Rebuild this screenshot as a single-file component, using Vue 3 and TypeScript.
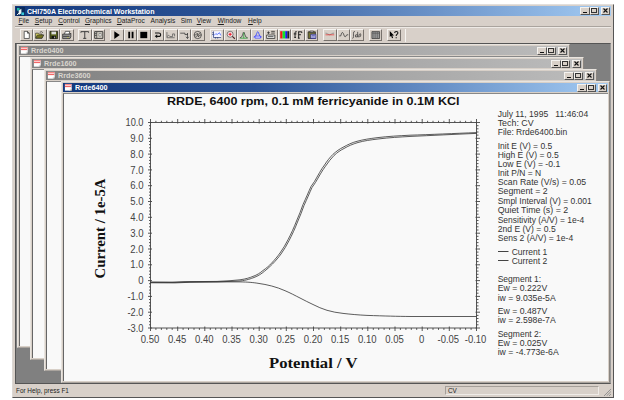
<script setup lang="ts">
interface Child { title: string; x: number; y: number; w: number; h: number; active: boolean }
interface Label { t: string; y: number; w: number }

const menus = [
  { t: 'File', w: 16.2 }, { t: 'Setup', w: 23.6 }, { t: 'Control', w: 26.6 }, { t: 'Graphics', w: 32 },
  { t: 'DataProc', w: 33.6 }, { t: 'Analysis', w: 30.2, plain: true }, { t: 'Sim', w: 16, plain: true },
  { t: 'View', w: 21 }, { t: 'Window', w: 30.4 }, { t: 'Help', w: 20 },
]

const toolbar: { pad: number; items: string[] }[] = [
  { pad: 0, items: ['new', 'open', 'save', 'print'] },
  { pad: 4.5, items: ['tech', 'param'] },
  { pad: 5, items: ['play', 'pause', 'stop', 'reverse', 'zero', 'ir', 'cell'] },
  { pad: 5.5, items: ['plot', 'zoom', 'peak', 'peak2', 'info', 'color', 'font', 'paste'] },
  { pad: 5.3, items: ['base', 'smooth', 'integral'] },
  { pad: 5.2, items: ['list'] },
  { pad: 5, items: ['help'] },
]

const windows: Child[] = [
  { title: 'Rrde0400', x: 1, y: 0, w: 553, h: 304, active: false },
  { title: 'Rrde1600', x: 14, y: 13, w: 554, h: 303, active: false },
  { title: 'Rrde3600', x: 28, y: 25, w: 553, h: 302, active: false },
  { title: 'Rrde6400', x: 45, y: 37, w: 549, h: 302, active: true },
]

const X0 = 150.5, X1 = 476.5, Y0 = 122.5, Y1 = 328
const dx = (X1 - X0) / 60
const dy = (Y1 - Y0) / 65
let bottomTicks = '', topTicks = '', leftTicks = '', rightTicks = ''
for (let i = 0; i <= 60; i++) {
  const x = (X0 + i * dx).toFixed(1)
  if (i % 5 === 0) {
    bottomTicks += `M${x} 326.5v4.5`
    topTicks += `M${x} 119v4.5`
  } else {
    bottomTicks += `M${x} 328v1.9`
    topTicks += `M${x} 120.8v1.7`
  }
}
for (let j = 0; j <= 65; j++) {
  const y = (Y0 + j * dy).toFixed(1)
  const major = j % 5 === 0
  leftTicks += major ? `M148 ${y}h4` : `M149 ${y}h1.5`
  rightTicks += major ? `M475.5 ${y}h4.5` : `M476.5 ${y}h2`
}
const xLabels = ['0.50', '0.45', '0.40', '0.35', '0.30', '0.25', '0.20', '0.15', '0.10', '0.05', '0', '-0.05', '-0.10']
const yLabels = ['10.0', '9.0', '8.0', '7.0', '6.0', '5.0', '4.0', '3.0', '2.0', '1.0', '0', '-1.0', '-2.0', '-3.0']
const xw = (s: string) => (s.length === 1 ? 5.3 : s.length === 4 ? 18.5 : 21.5)
const yw = (s: string) => [0, 5.3, 0, 13.3, s[0] === '-' ? 16 : 18][s.length]

const info: Label[] = [
  { t: 'July 11, 1995\u00a0\u00a0 11:46:04', y: 116.8, w: 90.5 },
  { t: 'Tech: CV', y: 126, w: 36 },
  { t: 'File: Rrde6400.bin', y: 135.2, w: 69.5 },
  { t: 'Init E (V) = 0.5', y: 148.6, w: 54.5 },
  { t: 'High E (V) = 0.5', y: 157.8, w: 61 },
  { t: 'Low E (V) = -0.1', y: 166.9, w: 62.5 },
  { t: 'Init P/N = N', y: 176, w: 43.5 },
  { t: 'Scan Rate (V/s) = 0.05', y: 185.1, w: 88.5 },
  { t: 'Segment = 2', y: 194.3, w: 50 },
  { t: 'Smpl Interval (V) = 0.001', y: 203.8, w: 94 },
  { t: 'Quiet Time (s) = 2', y: 213.3, w: 70.5 },
  { t: 'Sensitivity (A/V) = 1e-4', y: 222.6, w: 86.5 },
  { t: '2nd E (V) = 0.5', y: 231.9, w: 58 },
  { t: 'Sens 2 (A/V) = 1e-4', y: 241, w: 75.5 },
  { t: 'Segment 1:', y: 282.2, w: 43.5 },
  { t: 'Ew = 0.222V', y: 291.4, w: 49.5 },
  { t: 'iw = 9.035e-5A', y: 300.5, w: 58 },
  { t: 'Ew = 0.487V', y: 313.7, w: 49.5 },
  { t: 'iw = 2.598e-7A', y: 323, w: 58 },
  { t: 'Segment 2:', y: 337, w: 43.5 },
  { t: 'Ew = 0.025V', y: 346.2, w: 49.5 },
  { t: 'iw = -4.773e-6A', y: 355.4, w: 61 },
]

const forward = 'M150.5 282L172 282.2L184 281.7L217 281.4L230 280.7L240 279.8C246 279 250 277.6 253 276.4C257 275 260 273 263 270.5C267 267.6 269 266 271.5 263.2C275 259.5 277.5 256.5 280 253C283 249 285.5 244.5 288 239.7C291 234 294 227.5 296.5 221C299 215.5 301 210 303 204.5C306 198 308.5 192 311 186.5L314.4 181.6C318 175.5 321 169.5 324.5 165C327 161 330 157.3 333 154.3C336.5 151.2 339.5 149 343 147.3C347.5 144.8 352 142.6 357 141.3C363 139.6 370 138.6 377 137.7C388 136.3 399 135.8 410 135.2C430 134.6 455 133.4 476.5 132.6'
const reverse = 'M150.5 282.8L175 282.9L190 282.3L217 281.9L240 281C247 280.2 251 278.6 254 277.5C258 276 261.5 273.8 264.5 271.2C268 268.4 270 266.5 272.5 264C276 260.4 278.5 257.4 281 254C284 250 286.5 245.4 289 240.7C292 235 295 228.5 297.5 222C300 216.5 302 211 304 205.5C307 199 309.5 193 312 187.5L315.4 182.6C319 176.5 322 170.8 325.5 166.2C328 162.4 331 158.6 334 155.5C337.5 152.3 340.5 150.2 344 148.5C348 146 353 144 358 142.5C364 140.8 371 139.8 378 139C389 137.6 400 137 411 136.4C431 135.5 455 134.3 476.5 133.4'
const ring = 'M150.5 282.4H175L190 281.9H240C248 282 253 282.5 258 283.3C263 284 267 284.8 271.7 286C276.5 287.2 280.5 288.8 285 290.7C290.5 293 295 295.5 300 298C304.5 300.4 309 302.6 313 304.5C317.5 306.8 322 308.8 327 310.3C332 311.8 337.5 312.8 343 313.4C351 314.3 358.5 315 367 315.4C385 316 397 316.4 411 316.5H476.5'
</script>

<template>
  <div class="app">
    <header class="title main">
      <svg class="logo" viewBox="0 0 10 10"><rect width="10" height="10" fill="#0a2a5c" /><path d="M1 1h3v3H1z" fill="#20b8a8" /><path d="M3 4l3-2v5l-3 2z" fill="#e8f4f4" /><path d="M6 6h3v3H6z" fill="#38c8d8" /><path d="M1 9l3-3" stroke="#fff" /></svg>
      <svg class="caption" width="136" height="10"><text x="0" y="7.5" textLength="127.5" lengthAdjust="spacingAndGlyphs">CHI750A Electrochemical Workstation</text></svg>
      <span class="controls"><i class="min" /><i class="max" /><i class="close">
        <svg viewBox="0 0 9 7"><path d="M2.5 1.5l4 4m0-4l-4 4" /></svg></i></span>
    </header>

    <nav class="menu">
      <span v-for="m in menus" :key="m.t" :style="{ width: m.w + 'px' }"><template v-if="m.plain">{{ m.t }}</template><template v-else><u>{{ m.t[0] }}</u>{{ m.t.slice(1) }}</template></span>
    </nav>

    <div class="toolbar">
      <div v-for="(g, gi) in toolbar" :key="gi" class="group" :style="{ marginLeft: g.pad + 'px' }">
        <button v-for="k in g.items" :key="k" class="tool">
          <svg viewBox="0 0 12 11" fill="none" stroke="#333" stroke-width=".8">
            <path v-if="k === 'new'" d="M3.2 1.5h3.6l2 2v5.8H3.2zM6.8 1.5v2h2" fill="#fff" />
            <template v-else-if="k === 'open'"><path d="M1.5 9V3.5h3l1 1h3V9z" fill="#e8e060" /><path d="M1.5 9l2-3.6h7L8.5 9z" fill="#77751c" /><path d="M6 2.5q2-1.6 3.5.5" /></template>
            <template v-else-if="k === 'save'"><path d="M1.8 1.5h8.4v8H1.8z" fill="#56601c" stroke="#111" /><path d="M3.5 1.8h5v3h-5z" fill="#ddd" stroke="none" /><path d="M3.6 6.5h4.8v3H3.6z" fill="#111" stroke="none" /><path d="M7 7.3v1.8" stroke="#fff" /></template>
            <template v-else-if="k === 'print'"><path d="M3.5 4.5l1-3h5l-1 3" fill="#fff" /><path d="M1.5 4.5h8l1-1v4l-1 2h-8z" fill="#999" stroke="#222" /><path d="M2 7h7" stroke="#222" /><path d="M6.5 8.2H8" stroke="#cc3" /></template>
            <path v-else-if="k === 'tech'" d="M1.8 3V1.8h8.4V3M6 1.8v7.4M4.3 9.2h3.4" stroke="#333" stroke-width="1" />
            <template v-else-if="k === 'param'"><path d="M1.5 1.8h9v7.4h-9z" fill="#d8d4c8" stroke-width="1" /><path d="M3.8 2v7M1.7 4h2M1.7 6h2" /><path d="M6.2 3.8h2.5v3H6.2z" fill="#f4f4ee" stroke="#777" /></template>
            <path v-else-if="k === 'play'" d="M3.3 1.4l6 4.2-6 4.2z" fill="#000" stroke="none" />
            <path v-else-if="k === 'pause'" d="M3.3 2h2v7h-2zM7 2h2v7H7z" fill="#000" stroke="none" />
            <path v-else-if="k === 'stop'" d="M2.2 2h7.6v7H2.2z" fill="#000" stroke="none" />
            <template v-else-if="k === 'reverse'"><path d="M3 3.3h4.2q2 0 2 1.9T7.2 7H4.5" stroke="#111" stroke-width="1.2" /><path d="M5.4 4.8v4.4L2.7 7z" fill="#111" stroke="none" /></template>
            <path v-else-if="k === 'zero'" d="M1.8 2.3v6.2h8.5M2 7.2q2-3 3 0h3V4.3h2.2V7" stroke="#555" />
            <path v-else-if="k === 'ir'" d="M1 3.5h5.2V5H9V3.5M9 3.5v5.8M7.3 7.5L9 9.3l1.3-1.8" stroke="#333" />
            <template v-else-if="k === 'cell'"><circle cx="6" cy="5.5" r="4" /><path d="M2 5.5h1.7l1.8-2 1.2 4.2 1.2-2.2H10M3.5 8l5-5" /></template>
            <template v-else-if="k === 'plot'"><path d="M1 1.3h10v8H1z" fill="#f4f4ff" stroke="none" /><path d="M2.4 1.5v6.8h8.4M1 3h1.4M1 5h1.4M4.6 8v1.4M7 8v1.4" stroke="#24346c" /><path d="M3 6l2-2 1.5 1L9 3l1.5 3" stroke="#35f" /></template>
            <template v-else-if="k === 'zoom'"><circle cx="5.3" cy="4.7" r="3.3" fill="#f9e6e6" stroke="#555" /><path d="M3.6 4.7H7M5.3 3v3.4" stroke="#e12" stroke-width="1.1" /><path d="M7.7 7l2.8 2.6" stroke="#422" stroke-width="1.2" /></template>
            <template v-else-if="k === 'peak'"><path d="M1.5 8.8Q4.3 8.5 5 4.5q1-4.5 2 0 .7 4 3.5 4.3" stroke="#333" /><path d="M2 9h8M6 3v6" stroke="#179a25" /></template>
            <template v-else-if="k === 'peak2'"><path d="M1.5 7.8q2.5 0 3.2-3.5 1.3-5 2.6 0Q8 7.8 10.5 7.8" stroke="#45f" stroke-width="1" /><path d="M3 6.7h6v2.2H3z" fill="#e8edff" stroke="#33f" /></template>
            <template v-else-if="k === 'info'"><path d="M1.5 5.5h9v3.8h-9z" fill="#eee" stroke="#222" /><path d="M2 3h3M3.5 1.5v3M6.5 1.5h4M6.5 3.4h4M3 7.3h6" stroke="#222" /></template>
            <template v-else-if="k === 'color'"><path d="M1 1.3h2.6v8H1z" fill="#f01818" stroke="none" /><path d="M3.6 1.3h3v8h-3z" fill="#13e428" stroke="none" /><path d="M6.6 1.3h2.3v8H6.6z" fill="#1818f0" stroke="none" /><path d="M8.9 1.3H11v8H8.9z" fill="#222" stroke="none" /></template>
            <path v-else-if="k === 'font'" d="M5 2q-2-.8-2 1.2v5M1.6 4.3h3M2.2 8.2h1.9M6.4 2h4v1.3M7 2v7M6.2 9h2M7 5.2h2.5" stroke="#111" stroke-width="1" />
            <template v-else-if="k === 'paste'"><path d="M2 2h8v7.3H2z" fill="#747230" stroke="#222" /><path d="M4 1.2h4v1.6H4z" fill="#ddd" /><path d="M5 4.7h5.5v4.6H5z" fill="#dfe3ff" stroke="#228" /><path d="M6 6.2h3.5M6 7.7h3.5" stroke="#339" /></template>
            <template v-else-if="k === 'base'"><path d="M1.3 3.5q1.5 0 2.5 1 2 1.5 4 0 1.2-1.2 3-1" stroke="#777" /><path d="M1.3 5.3h9.6" stroke="#e33" /></template>
            <path v-else-if="k === 'smooth'" d="M1 6.5h1.7Q4 1 5.4 3.5L6.8 7Q8 8.5 9.3 5.3H11" stroke="#333" />
            <path v-else-if="k === 'integral'" d="M1.2 9.2q1.2 0 1.2-2V3.5q0-2 1.5-2M7 2v6M7 5.5Q4.3 4.4 4.3 6.6T7 7M8 8l.8-3.2q1.7-1.7 1.7.6T8.8 7.5" stroke="#333" />
            <template v-else-if="k === 'list'"><path d="M1.8 1.8h8.4v7.6H1.8z" fill="#999" stroke="#333" /><path d="M4 2v7M6 2v7M8 2v7M2 3.7h8" stroke="#555" stroke-width=".6" /></template>
            <template v-else><path d="M1.6 1.2v6.5l1.5-1.3 1 2.6 1.2-.5-1-2.4h2z" fill="#000" stroke="none" /><path d="M7 3.3q0-1.6 1.8-1.6t1.7 1.5q0 1-1 1.6-.8.5-.8 1.7M8.7 8v1.2" stroke="#111" stroke-width="1.2" /></template>
          </svg>
        </button>
      </div>
      <span class="groove" />
    </div>

    <main class="mdi">
      <section
        v-for="w in windows" :key="w.title" class="child"
        :style="{ left: w.x + 'px', top: w.y + 'px', width: w.w + 'px', height: w.h + 'px' }"
      >
        <div class="title" :class="{ inactive: !w.active }">
          <svg class="logo" viewBox="0 0 10 10"><path d="M1 1h7.5v7.5H1z" fill="#fff" /><path d="M1 2h7.5M1 4h7" stroke="#e44" /><path d="M1 8.8h5L9 6v3z" fill="#333" /><path d="M5 8.5L8.6 5v3.5z" fill="#ddd" /></svg>
          <svg class="caption" width="40" height="9"><text x="0" y="6.8" textLength="32.5" lengthAdjust="spacingAndGlyphs">{{ w.title }}</text></svg>
          <span class="controls"><i class="min" /><i class="max" /><i class="close">
            <svg viewBox="0 0 9 7"><path d="M2.5 1.5l4 4m0-4l-4 4" /></svg></i></span>
        </div>
        <div class="body">
          <svg v-if="w.active" class="chart" width="544" height="288" viewBox="64 94 544 288">
            <text class="head" x="167" y="104.7" textLength="292.5" lengthAdjust="spacingAndGlyphs">RRDE, 6400 rpm, 0.1 mM ferricyanide in 0.1M KCl</text>
            <text class="axis" x="269" y="367.7" textLength="88.5" lengthAdjust="spacingAndGlyphs">Potential / V</text>
            <text class="axis" transform="translate(105 278.5) rotate(-90)" textLength="100" lengthAdjust="spacingAndGlyphs">Current / 1e-5A</text>
            <rect class="frame" :x="X0" :y="Y0" :width="X1 - X0" :height="Y1 - Y0" />
            <path class="ticks" :d="bottomTicks + topTicks + leftTicks + rightTicks" />
            <text
              v-for="(l, i) in xLabels" :key="'x' + l" class="num" text-anchor="middle"
              :x="X0 + i * 5 * dx - (l[0] === '-' ? 1 : 0.5)" y="343.3" :textLength="xw(l)" lengthAdjust="spacingAndGlyphs"
            >{{ l }}</text>
            <text
              v-for="(l, i) in yLabels" :key="'y' + l" class="num" text-anchor="end"
              x="143.5" :y="Y0 + i * 5 * dy + 3.7" :textLength="yw(l)" lengthAdjust="spacingAndGlyphs"
            >{{ l }}</text>
            <path class="curve" :d="forward" />
            <path class="curve" :d="reverse" />
            <path class="curve" :d="ring" />
            <text v-for="l in info" :key="l.y" class="info" x="497.7" :y="l.y" :textLength="l.w" lengthAdjust="spacingAndGlyphs">{{ l.t }}</text>
            <path class="key" d="M498 251.5h10.5M498 260.5h10.5" />
            <text class="info" x="511.7" y="254.8" textLength="35.5" lengthAdjust="spacingAndGlyphs">Current 1</text>
            <text class="info" x="511.7" y="264" textLength="35.5" lengthAdjust="spacingAndGlyphs">Current 2</text>
          </svg>
        </div>
      </section>
    </main>

    <footer class="status">
      <span class="hint">For Help, press F1</span>
      <span class="mode">CV</span>
      <svg class="grip" viewBox="0 0 8 8"><path d="M1 8l7-7M3.5 8L8 3.5M6 8l2-2" stroke="#888" stroke-width=".9" /></svg>
    </footer>
  </div>
</template>

<style>
body { background: #fff; overflow: hidden; }
</style>

<style scoped>
.app {
  box-sizing: border-box;
  width: 602px;
  height: 394px;
  margin: 4px 0 0 12px;
  padding: 1px 2px 0 2px;
  display: flex;
  flex-direction: column;
  background: #d8d0c9;
  border-right: 1px solid #555;
  border-bottom: 1px solid #555;
  border-left: 1px solid #dcd8d4;
  border-top: 1px solid #e2dfdc;
  font-family: "Liberation Sans", Arial, sans-serif;
  color: #222;
}
.title {
  display: flex;
  align-items: center;
  height: 9px;
  flex: none;
  background: linear-gradient(90deg, #14397d, #2b5396 35%, #6a92c8 70%, #a3cbf3);
  color: #fff;
}
.title.main { height: 10px; }
.title.inactive { background: linear-gradient(90deg, #828282, #bcbcbc); color: #d9d5ce; }
.logo { width: 9px; height: 9px; margin-left: 1px; flex: none; }
.caption { margin-left: 2px; flex: none; font-weight: bold; font-size: 7.3px; fill: currentColor; }
.controls { margin-left: auto; margin-right: 1px; display: flex; }
.controls i {
  box-sizing: border-box;
  position: relative;
  width: 9.5px;
  height: 8px;
  background: #d8d0c8;
  border: 1px solid;
  border-color: #f4f2ef #555 #555 #f4f2ef;
}
.controls .close { margin-left: 1.5px; }
.controls .close svg { display: block; width: 9px; height: 7px; margin: -1px; fill: none; stroke: #111; stroke-width: 1.1; }
.min::after { content: ""; display: block; width: 4px; height: 1px; margin: 4px 0 0 1.5px; background: #111; }
.max::after { content: ""; display: block; box-sizing: border-box; width: 6px; height: 5px; border: 1px solid #333; margin: 0 0 0 .5px; }
.menu {
  box-sizing: border-box;
  display: flex;
  align-items: center;
  height: 11px;
  flex: none;
  padding: 0 0 1px 3.5px;
  border-bottom: 1px solid #aaa49e;
  font-size: 6.6px;
  letter-spacing: .05px;
  line-height: 9px;
}
.menu span { flex: none; }
.menu u { text-underline-offset: 1px; text-decoration-thickness: .7px; }
.toolbar {
  display: flex;
  height: 16px;
  flex: none;
  padding: 1px 0 0 4.5px;
  box-sizing: border-box;
  border-top: 1px solid #eeeae6;
}
.group { display: flex; }
.tool {
  box-sizing: border-box;
  width: 13.5px;
  height: 12px;
  padding: 0;
  background: #d8d0c8;
  border: 1px solid;
  border-color: #f5f3f0 #77716c #77716c #f5f3f0;
}
.tool svg { display: block; width: 11.5px; height: 10px; }
.groove { width: 1px; height: 13px; margin-left: 4px; background: #f5f3f0; }
.mdi {
  position: relative;
  height: 341px;
  flex: none;
  box-sizing: border-box;
  border: 1px solid #555;
  border-right-color: #999;
  background: #808080;
  overflow: hidden;
}
.child {
  position: absolute;
  box-sizing: border-box;
  padding: 1px;
  background: #d8d0c8;
  border: 1px solid;
  border-color: #e8e4df #8a8580 #aaa49e #e8e4df;
  display: flex;
  flex-direction: column;
}
.body {
  flex: 1;
  margin-top: 1px;
  background: #f9f9f9;
  border-left: 1px solid #666;
  border-top: 1px solid #888;
  overflow: hidden;
}
.chart { display: block; }
.head { font: bold 11.2px "Liberation Sans", Arial, sans-serif; fill: #111; }
.axis { font: bold 14px "Liberation Serif", "Times New Roman", serif; fill: #111; }
.num { font: 10px "Liberation Sans", Arial, sans-serif; fill: #444; }
.info { font: 8.2px "Liberation Sans", Arial, sans-serif; fill: #333; }
.frame { fill: none; stroke: #555; stroke-width: 1; }
.ticks { fill: none; stroke: #444; stroke-width: .9; }
.curve { fill: none; stroke: #333; stroke-width: .8; }
.key { stroke: #444; stroke-width: 1; }
.status {
  display: flex;
  align-items: center;
  flex: 1;
  font-size: 6.4px;
  padding-left: 1px;
}
.hint { width: 429px; flex: none; }
.mode {
  box-sizing: border-box;
  width: 155px;
  height: 9px;
  line-height: 8px;
  padding-left: 2px;
  border: 1px solid;
  border-color: #a59f99 #efebe7 #efebe7 #a59f99;
}
.grip { width: 8px; height: 8px; margin: 3px 0 0 4px; }
</style>
